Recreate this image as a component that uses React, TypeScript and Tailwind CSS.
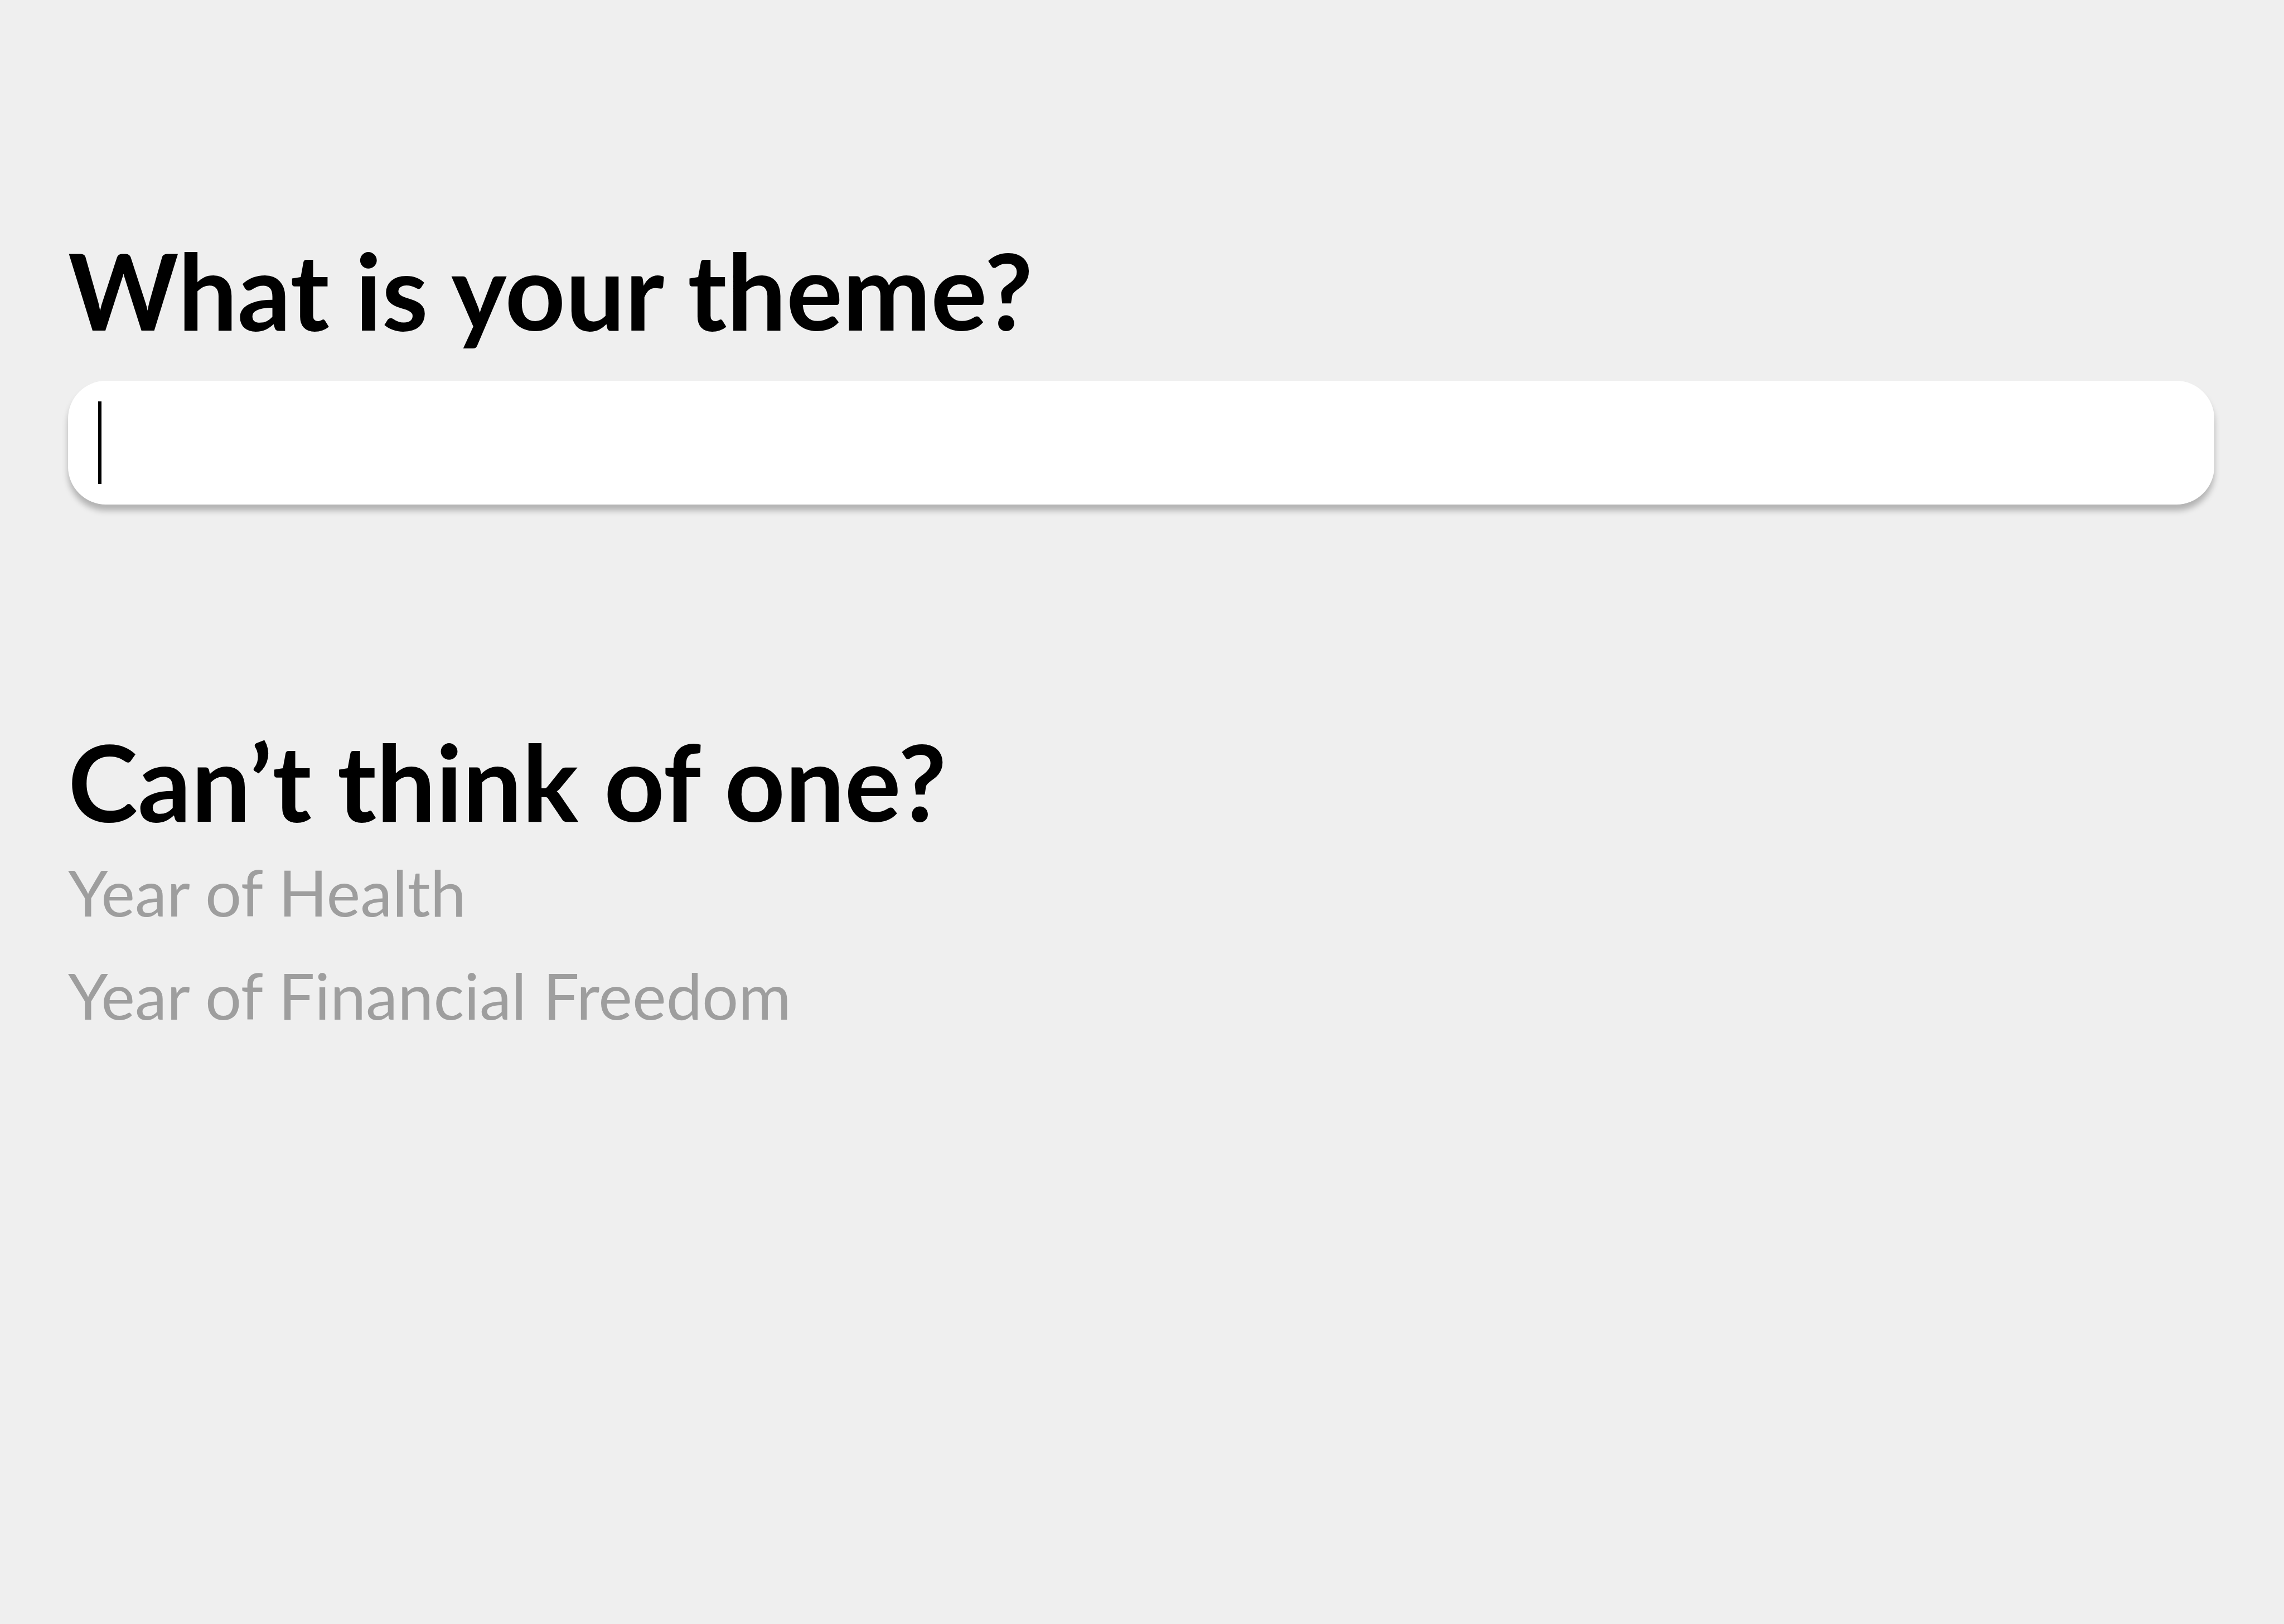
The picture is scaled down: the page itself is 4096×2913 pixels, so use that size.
import { useState } from "react";

const suggestions = ["Year of Health", "Year of Financial Freedom"];

export default function App() {
  const [theme, setTheme] = useState("");

  return (
    <main className="flex min-h-screen flex-col bg-[#efefef] pt-[414px] pr-[125px] pb-32 pl-[122px] font-['Lato',sans-serif] text-black">
      <section className="flex flex-col">
        <h1 className="text-[189px] leading-[212px] font-bold">
          <label htmlFor="theme">What is your theme?</label>
        </h1>
        <div className="relative mt-[57px]">
          <input
            id="theme"
            type="text"
            autoComplete="off"
            value={theme}
            onChange={(e) => setTheme(e.target.value)}
            className="block h-[222px] w-full rounded-[68px] bg-white px-[54px] text-[115px] shadow-[0_11px_11px_rgba(0,0,0,0.25)] outline-none"
          />
          {theme === "" && (
            <span aria-hidden="true" className="pointer-events-none absolute inset-y-[37px] left-[54px] w-[6px] bg-black" />
          )}
        </div>
      </section>

      <section className="mt-[390px] flex flex-col items-start">
        <h2 className="text-[189px] leading-[212px] font-bold">Can’t think of one?</h2>
        <ul>
          {suggestions.map((s) => (
            <li key={s}>
              <button
                type="button"
                onClick={() => setTheme(s)}
                className="block text-left text-[115px] leading-[185px] font-normal text-[#9e9e9e]"
              >
                {s}
              </button>
            </li>
          ))}
        </ul>
      </section>
    </main>
  );
}
